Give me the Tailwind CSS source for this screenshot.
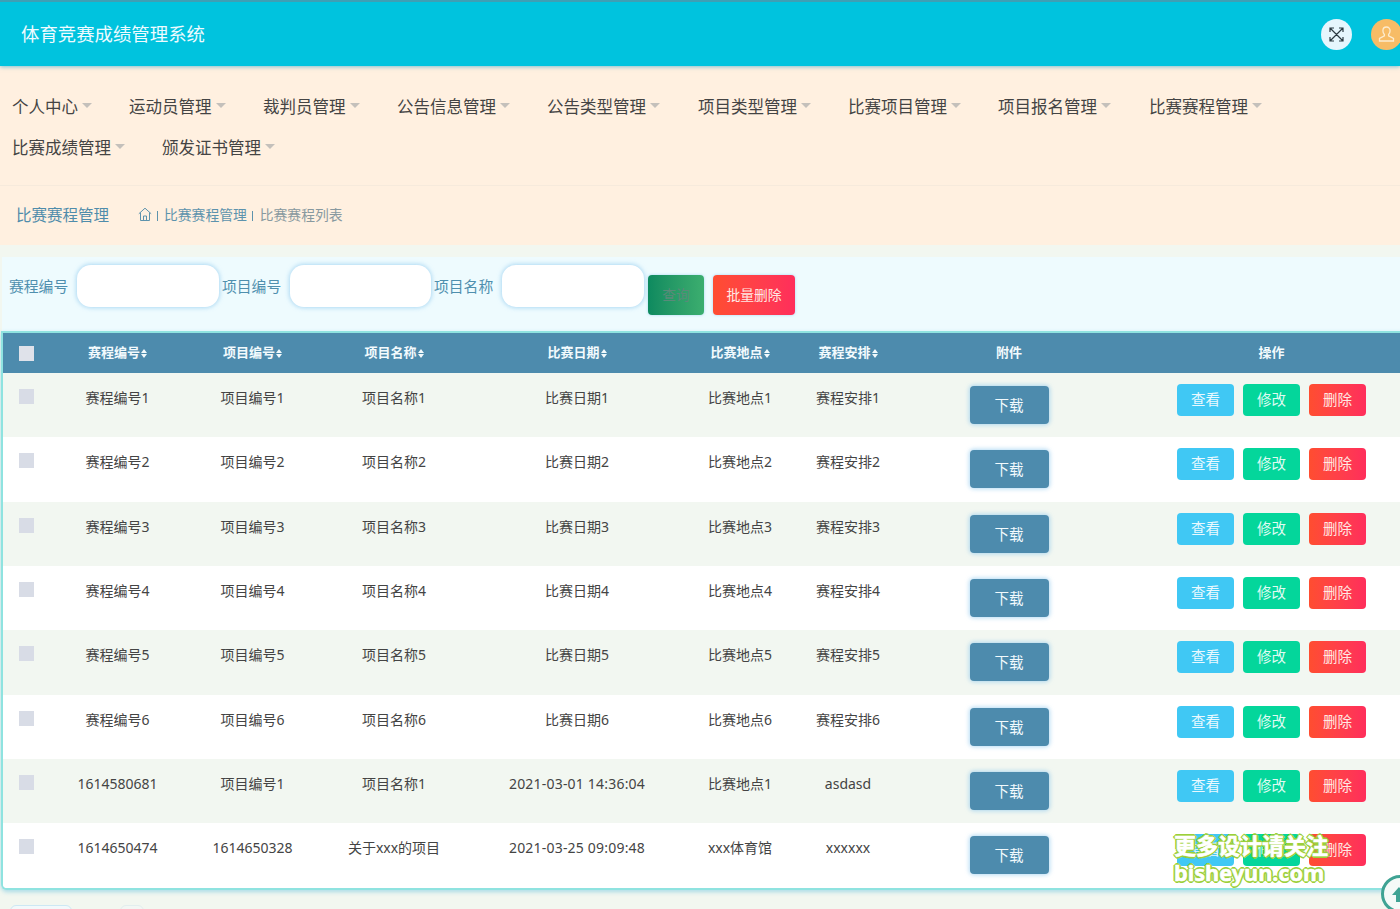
<!DOCTYPE html>
<html lang="zh-CN">
<head>
    <meta charset="UTF-8">
    <title>体育竞赛成绩管理系统</title>
    <script src="https://cdn.jsdelivr.net/npm/@tailwindcss/browser@4"></script>
</head>
<body class="bg-[#f2f7f0] font-['Noto_Sans','Noto_Sans_CJK_SC',sans-serif]">
<div class="relative w-[1400px] h-[909px] overflow-hidden">

    <!-- header -->
    <header class="h-[66px] bg-[#00c3de] border-t-2 border-[#3f9fb4] flex items-center justify-between pl-[21px] shadow-[0_1px_4px_rgba(0,150,200,0.5)] relative z-10">
        <h1 class="text-[18.4px] text-[#eefbff]">体育竞赛成绩管理系统</h1>
        <div class="flex gap-[19px] mr-[-2px]">
            <div class="w-[31px] h-[31px] rounded-full bg-[#e6f6fd] flex items-center justify-center">
                <svg width="15" height="15" viewBox="0 0 15 15" fill="none" stroke="#2b3a42" stroke-width="1.2"><path d="M1.5 1.5l12 12M13.5 1.5l-12 12M1 5V1h4M10 1h4v4M14 10v4h-4M5 14H1v-4"/></svg>
            </div>
            <div class="w-[31px] h-[31px] rounded-full bg-[#f7bc66] flex items-center justify-center">
                <svg width="19" height="19" viewBox="0 0 19 19" fill="none" stroke="#fdeccf" stroke-width="1.3"><path d="M9.5 2c-2.3 0-3.6 1.700-3.600 3.800 0 1.500.6 2.800 1.500 3.700v1.400L2.500 13.500v2.500h14v-2.500l-4.900-2.600V9.500c.9-.9 1.500-2.200 1.500-3.700C13.100 3.700 11.800 2 9.500 2z"/></svg>
            </div>
        </div>
    </header>

    <!-- nav -->
    <nav class="h-[120px] bg-[#fff0e0] border-b border-[#f6eadc] pt-[20px] pl-[12px] text-[16.5px] text-[#444] leading-[41px]">
        <div class="flex">
            <div class="flex items-center w-[117px]">个人中心<span class="ml-[4px] mt-[-2px] border-x-[5px] border-t-[5px] border-x-transparent border-t-[#c4c0bb]"></span></div>
            <div class="flex items-center w-[134px]">运动员管理<span class="ml-[4px] mt-[-2px] border-x-[5px] border-t-[5px] border-x-transparent border-t-[#c4c0bb]"></span></div>
            <div class="flex items-center w-[134px]">裁判员管理<span class="ml-[4px] mt-[-2px] border-x-[5px] border-t-[5px] border-x-transparent border-t-[#c4c0bb]"></span></div>
            <div class="flex items-center w-[150px]">公告信息管理<span class="ml-[4px] mt-[-2px] border-x-[5px] border-t-[5px] border-x-transparent border-t-[#c4c0bb]"></span></div>
            <div class="flex items-center w-[151px]">公告类型管理<span class="ml-[4px] mt-[-2px] border-x-[5px] border-t-[5px] border-x-transparent border-t-[#c4c0bb]"></span></div>
            <div class="flex items-center w-[150px]">项目类型管理<span class="ml-[4px] mt-[-2px] border-x-[5px] border-t-[5px] border-x-transparent border-t-[#c4c0bb]"></span></div>
            <div class="flex items-center w-[150px]">比赛项目管理<span class="ml-[4px] mt-[-2px] border-x-[5px] border-t-[5px] border-x-transparent border-t-[#c4c0bb]"></span></div>
            <div class="flex items-center w-[151px]">项目报名管理<span class="ml-[4px] mt-[-2px] border-x-[5px] border-t-[5px] border-x-transparent border-t-[#c4c0bb]"></span></div>
            <div class="flex items-center">比赛赛程管理<span class="ml-[4px] mt-[-2px] border-x-[5px] border-t-[5px] border-x-transparent border-t-[#c4c0bb]"></span></div>
        </div>
        <div class="flex">
            <div class="flex items-center w-[150px]">比赛成绩管理<span class="ml-[4px] mt-[-2px] border-x-[5px] border-t-[5px] border-x-transparent border-t-[#c4c0bb]"></span></div>
            <div class="flex items-center">颁发证书管理<span class="ml-[4px] mt-[-2px] border-x-[5px] border-t-[5px] border-x-transparent border-t-[#c4c0bb]"></span></div>
        </div>
    </nav>

    <!-- breadcrumb -->
    <div class="h-[59px] bg-[#fff0e0] flex items-center pl-[16px]">
        <span class="text-[15.5px] text-[#4f8cab] w-[122px]">比赛赛程管理</span>
        <svg class="mt-[-3px]" width="14" height="15" viewBox="0 0 14 15" fill="none" stroke="#5d93ad" stroke-width="1"><path d="M.8 6.800 7 1.200l6.200 5.600M2.500 5.500v8h9v-8M5.500 13.500V9h3v4.500"/></svg>
        <span class="ml-[5px] w-[1px] h-[10px] bg-[#5d93ad]"></span>
        <span class="ml-[6px] text-[13.8px] text-[#5d93ad]">比赛赛程管理</span>
        <span class="ml-[5px] w-[1px] h-[10px] bg-[#5d93ad]"></span>
        <span class="ml-[7px] text-[13.800px] text-[#88999f]">比赛赛程列表</span>
    </div>

    <!-- search -->
    <div class="mt-[12px] h-[74px] ml-[2px] bg-[#eefbfe] flex items-start pl-[7px] pt-[8px] text-[14.8px] text-[#4f8fae]">
        <label class="mt-[10px] w-[68px]">赛程编号</label>
        <input type="text" class="w-[142px] h-[42px] bg-white rounded-[14px] shadow-[0_0_4px_1px_rgba(120,190,235,0.55)]">
        <label class="mt-[10px] ml-[3px] w-[68px]">项目编号</label>
        <input type="text" class="w-[141px] h-[42px] bg-white rounded-[14px] shadow-[0_0_4px_1px_rgba(120,190,235,0.55)]">
        <label class="mt-[10px] ml-[3px] w-[68px]">项目名称</label>
        <input type="text" class="w-[142px] h-[42px] bg-white rounded-[14px] shadow-[0_0_4px_1px_rgba(120,190,235,0.55)]">
        <button class="mt-[10px] ml-[4px] w-[56px] h-[40px] rounded-[4px] bg-gradient-to-r from-[#0d8a5f] to-[#3cae6f] text-[13.8px] text-[#5a8a7a] shadow-[0_0_3px_rgba(120,190,235,0.6)]">查询</button>
        <button class="mt-[10px] ml-[9px] w-[82px] h-[40px] rounded-[4px] bg-gradient-to-r from-[#ff4d30] to-[#ff2e5b] text-[13.8px] text-[#ffe9e4] shadow-[0_0_3px_rgba(120,190,235,0.6)]">批量删除</button>
    </div>

    <!-- table -->
    <div class="ml-[1px] rounded-b-[6px] border-l-2 border-t-2 border-b-2 border-[#8fe3e0] w-[1428px] bg-white overflow-hidden shadow-[0_2px_4px_rgba(120,200,225,0.6)]">
        <table class="table-fixed w-[1427px] text-[14px] text-[#444] text-center border-collapse">
            <colgroup>
                <col class="w-[50px]"><col class="w-[129px]"><col class="w-[141px]"><col class="w-[142px]"><col class="w-[224px]"><col class="w-[102px]"><col class="w-[114px]"><col class="w-[208px]"><col class="w-[317px]">
            </colgroup>
            <thead>
                <tr class="h-[40px] bg-[#4d8bad] text-[13px] font-bold text-[#f2fafd]">
                    <th class="pl-[16px] text-left"><span class="block w-[15px] h-[15px] bg-[#dfe2ea]"></span></th>
                    <th>赛程编号<span class="inline-flex flex-col gap-[1px] ml-[1px] align-middle"><i class="border-x-[3.500px] border-b-[4px] border-x-transparent border-b-[#f2fafd]"></i><i class="border-x-[3.500px] border-t-[4px] border-x-transparent border-t-[#f2fafd]"></i></span></th>
                    <th>项目编号<span class="inline-flex flex-col gap-[1px] ml-[1px] align-middle"><i class="border-x-[3.500px] border-b-[4px] border-x-transparent border-b-[#f2fafd]"></i><i class="border-x-[3.500px] border-t-[4px] border-x-transparent border-t-[#f2fafd]"></i></span></th>
                    <th>项目名称<span class="inline-flex flex-col gap-[1px] ml-[1px] align-middle"><i class="border-x-[3.500px] border-b-[4px] border-x-transparent border-b-[#f2fafd]"></i><i class="border-x-[3.500px] border-t-[4px] border-x-transparent border-t-[#f2fafd]"></i></span></th>
                    <th>比赛日期<span class="inline-flex flex-col gap-[1px] ml-[1px] align-middle"><i class="border-x-[3.500px] border-b-[4px] border-x-transparent border-b-[#f2fafd]"></i><i class="border-x-[3.500px] border-t-[4px] border-x-transparent border-t-[#f2fafd]"></i></span></th>
                    <th>比赛地点<span class="inline-flex flex-col gap-[1px] ml-[1px] align-middle"><i class="border-x-[3.500px] border-b-[4px] border-x-transparent border-b-[#f2fafd]"></i><i class="border-x-[3.500px] border-t-[4px] border-x-transparent border-t-[#f2fafd]"></i></span></th>
                    <th>赛程安排<span class="inline-flex flex-col gap-[1px] ml-[1px] align-middle"><i class="border-x-[3.500px] border-b-[4px] border-x-transparent border-b-[#f2fafd]"></i><i class="border-x-[3.500px] border-t-[4px] border-x-transparent border-t-[#f2fafd]"></i></span></th>
                    <th>附件</th>
                    <th>操作</th>
                </tr>
            </thead>
            <tbody class="align-top">
                <tr class="h-[64.33px] bg-[#f2f7f1]">
                    <td class="pl-[16px] pt-[16px]"><span class="block w-[15px] h-[15px] bg-[#d8dce6]"></span></td>
                    <td class="pt-[14px]">赛程编号1</td><td class="pt-[14px]">项目编号1</td><td class="pt-[14px]">项目名称1</td><td class="pt-[14px]">比赛日期1</td><td class="pt-[14px]">比赛地点1</td><td class="pt-[14px]">赛程安排1</td>
                    <td class="pt-[13px]"><button class="w-[79px] h-[38px] rounded-[4px] bg-[#4d8bad] text-[14.5px] text-[#f2fafd] pt-[2px] shadow-[0_0_4px_1px_rgba(120,190,235,0.55)]">下载</button></td>
                    <td class="pt-[11px]"><div class="flex justify-center gap-[9px]"><button class="w-[57px] h-[32px] rounded-[4px] bg-[#40c8f4] text-[14.5px] text-[#e9f9ff]">查看</button><button class="w-[57px] h-[32px] rounded-[4px] bg-[#04d69b] text-[14.5px] text-[#dffbf2]">修改</button><button class="w-[57px] h-[32px] rounded-[4px] bg-gradient-to-r from-[#ff4d30] to-[#ff2e5b] text-[14.5px] text-[#ffe9e4]">删除</button></div></td>
                </tr>
                <tr class="h-[64.33px] bg-white">
                    <td class="pl-[16px] pt-[16px]"><span class="block w-[15px] h-[15px] bg-[#d8dce6]"></span></td>
                    <td class="pt-[14px]">赛程编号2</td><td class="pt-[14px]">项目编号2</td><td class="pt-[14px]">项目名称2</td><td class="pt-[14px]">比赛日期2</td><td class="pt-[14px]">比赛地点2</td><td class="pt-[14px]">赛程安排2</td>
                    <td class="pt-[13px]"><button class="w-[79px] h-[38px] rounded-[4px] bg-[#4d8bad] text-[14.5px] text-[#f2fafd] pt-[2px] shadow-[0_0_4px_1px_rgba(120,190,235,0.55)]">下载</button></td>
                    <td class="pt-[11px]"><div class="flex justify-center gap-[9px]"><button class="w-[57px] h-[32px] rounded-[4px] bg-[#40c8f4] text-[14.5px] text-[#e9f9ff]">查看</button><button class="w-[57px] h-[32px] rounded-[4px] bg-[#04d69b] text-[14.5px] text-[#dffbf2]">修改</button><button class="w-[57px] h-[32px] rounded-[4px] bg-gradient-to-r from-[#ff4d30] to-[#ff2e5b] text-[14.5px] text-[#ffe9e4]">删除</button></div></td>
                </tr>
                <tr class="h-[64.33px] bg-[#f2f7f1]">
                    <td class="pl-[16px] pt-[16px]"><span class="block w-[15px] h-[15px] bg-[#d8dce6]"></span></td>
                    <td class="pt-[14px]">赛程编号3</td><td class="pt-[14px]">项目编号3</td><td class="pt-[14px]">项目名称3</td><td class="pt-[14px]">比赛日期3</td><td class="pt-[14px]">比赛地点3</td><td class="pt-[14px]">赛程安排3</td>
                    <td class="pt-[13px]"><button class="w-[79px] h-[38px] rounded-[4px] bg-[#4d8bad] text-[14.5px] text-[#f2fafd] pt-[2px] shadow-[0_0_4px_1px_rgba(120,190,235,0.55)]">下载</button></td>
                    <td class="pt-[11px]"><div class="flex justify-center gap-[9px]"><button class="w-[57px] h-[32px] rounded-[4px] bg-[#40c8f4] text-[14.5px] text-[#e9f9ff]">查看</button><button class="w-[57px] h-[32px] rounded-[4px] bg-[#04d69b] text-[14.5px] text-[#dffbf2]">修改</button><button class="w-[57px] h-[32px] rounded-[4px] bg-gradient-to-r from-[#ff4d30] to-[#ff2e5b] text-[14.5px] text-[#ffe9e4]">删除</button></div></td>
                </tr>
                <tr class="h-[64.33px] bg-white">
                    <td class="pl-[16px] pt-[16px]"><span class="block w-[15px] h-[15px] bg-[#d8dce6]"></span></td>
                    <td class="pt-[14px]">赛程编号4</td><td class="pt-[14px]">项目编号4</td><td class="pt-[14px]">项目名称4</td><td class="pt-[14px]">比赛日期4</td><td class="pt-[14px]">比赛地点4</td><td class="pt-[14px]">赛程安排4</td>
                    <td class="pt-[13px]"><button class="w-[79px] h-[38px] rounded-[4px] bg-[#4d8bad] text-[14.5px] text-[#f2fafd] pt-[2px] shadow-[0_0_4px_1px_rgba(120,190,235,0.55)]">下载</button></td>
                    <td class="pt-[11px]"><div class="flex justify-center gap-[9px]"><button class="w-[57px] h-[32px] rounded-[4px] bg-[#40c8f4] text-[14.5px] text-[#e9f9ff]">查看</button><button class="w-[57px] h-[32px] rounded-[4px] bg-[#04d69b] text-[14.5px] text-[#dffbf2]">修改</button><button class="w-[57px] h-[32px] rounded-[4px] bg-gradient-to-r from-[#ff4d30] to-[#ff2e5b] text-[14.5px] text-[#ffe9e4]">删除</button></div></td>
                </tr>
                <tr class="h-[64.33px] bg-[#f2f7f1]">
                    <td class="pl-[16px] pt-[16px]"><span class="block w-[15px] h-[15px] bg-[#d8dce6]"></span></td>
                    <td class="pt-[14px]">赛程编号5</td><td class="pt-[14px]">项目编号5</td><td class="pt-[14px]">项目名称5</td><td class="pt-[14px]">比赛日期5</td><td class="pt-[14px]">比赛地点5</td><td class="pt-[14px]">赛程安排5</td>
                    <td class="pt-[13px]"><button class="w-[79px] h-[38px] rounded-[4px] bg-[#4d8bad] text-[14.5px] text-[#f2fafd] pt-[2px] shadow-[0_0_4px_1px_rgba(120,190,235,0.55)]">下载</button></td>
                    <td class="pt-[11px]"><div class="flex justify-center gap-[9px]"><button class="w-[57px] h-[32px] rounded-[4px] bg-[#40c8f4] text-[14.5px] text-[#e9f9ff]">查看</button><button class="w-[57px] h-[32px] rounded-[4px] bg-[#04d69b] text-[14.5px] text-[#dffbf2]">修改</button><button class="w-[57px] h-[32px] rounded-[4px] bg-gradient-to-r from-[#ff4d30] to-[#ff2e5b] text-[14.5px] text-[#ffe9e4]">删除</button></div></td>
                </tr>
                <tr class="h-[64.33px] bg-white">
                    <td class="pl-[16px] pt-[16px]"><span class="block w-[15px] h-[15px] bg-[#d8dce6]"></span></td>
                    <td class="pt-[14px]">赛程编号6</td><td class="pt-[14px]">项目编号6</td><td class="pt-[14px]">项目名称6</td><td class="pt-[14px]">比赛日期6</td><td class="pt-[14px]">比赛地点6</td><td class="pt-[14px]">赛程安排6</td>
                    <td class="pt-[13px]"><button class="w-[79px] h-[38px] rounded-[4px] bg-[#4d8bad] text-[14.5px] text-[#f2fafd] pt-[2px] shadow-[0_0_4px_1px_rgba(120,190,235,0.55)]">下载</button></td>
                    <td class="pt-[11px]"><div class="flex justify-center gap-[9px]"><button class="w-[57px] h-[32px] rounded-[4px] bg-[#40c8f4] text-[14.5px] text-[#e9f9ff]">查看</button><button class="w-[57px] h-[32px] rounded-[4px] bg-[#04d69b] text-[14.5px] text-[#dffbf2]">修改</button><button class="w-[57px] h-[32px] rounded-[4px] bg-gradient-to-r from-[#ff4d30] to-[#ff2e5b] text-[14.5px] text-[#ffe9e4]">删除</button></div></td>
                </tr>
                <tr class="h-[64.33px] bg-[#f2f7f1]">
                    <td class="pl-[16px] pt-[16px]"><span class="block w-[15px] h-[15px] bg-[#d8dce6]"></span></td>
                    <td class="pt-[14px]">1614580681</td><td class="pt-[14px]">项目编号1</td><td class="pt-[14px]">项目名称1</td><td class="pt-[14px] tracking-[0.2px]">2021-03-01 14:36:04</td><td class="pt-[14px]">比赛地点1</td><td class="pt-[14px]">asdasd</td>
                    <td class="pt-[13px]"><button class="w-[79px] h-[38px] rounded-[4px] bg-[#4d8bad] text-[14.5px] text-[#f2fafd] pt-[2px] shadow-[0_0_4px_1px_rgba(120,190,235,0.55)]">下载</button></td>
                    <td class="pt-[11px]"><div class="flex justify-center gap-[9px]"><button class="w-[57px] h-[32px] rounded-[4px] bg-[#40c8f4] text-[14.5px] text-[#e9f9ff]">查看</button><button class="w-[57px] h-[32px] rounded-[4px] bg-[#04d69b] text-[14.5px] text-[#dffbf2]">修改</button><button class="w-[57px] h-[32px] rounded-[4px] bg-gradient-to-r from-[#ff4d30] to-[#ff2e5b] text-[14.5px] text-[#ffe9e4]">删除</button></div></td>
                </tr>
                <tr class="h-[64.33px] bg-white">
                    <td class="pl-[16px] pt-[16px]"><span class="block w-[15px] h-[15px] bg-[#d8dce6]"></span></td>
                    <td class="pt-[14px]">1614650474</td><td class="pt-[14px]">1614650328</td><td class="pt-[14px]">关于xxx的项目</td><td class="pt-[14px] tracking-[0.2px]">2021-03-25 09:09:48</td><td class="pt-[14px]">xxx体育馆</td><td class="pt-[14px]">xxxxxx</td>
                    <td class="pt-[13px]"><button class="w-[79px] h-[38px] rounded-[4px] bg-[#4d8bad] text-[14.5px] text-[#f2fafd] pt-[2px] shadow-[0_0_4px_1px_rgba(120,190,235,0.55)]">下载</button></td>
                    <td class="pt-[11px]"><div class="flex justify-center gap-[9px]"><button class="w-[57px] h-[32px] rounded-[4px] bg-[#40c8f4] text-[14.5px] text-[#e9f9ff]">查看</button><button class="w-[57px] h-[32px] rounded-[4px] bg-[#04d69b] text-[14.5px] text-[#dffbf2]">修改</button><button class="w-[57px] h-[32px] rounded-[4px] bg-gradient-to-r from-[#ff4d30] to-[#ff2e5b] text-[14.5px] text-[#ffe9e4]">删除</button></div></td>
                </tr>
            </tbody>
        </table>
    </div>

    <!-- pagination, cut off by the window -->
    <div class="mt-[6px] pl-[10px] pt-[9px] flex gap-[48px]">
        <span class="w-[62px] h-[20px] rounded-[6px] bg-[#f2f9fb] border border-[#cde8f4]"></span>
        <span class="w-[24px] h-[20px] rounded-[6px] bg-[#f2f7f4] border border-[#e2eeee]"></span>
    </div>

    <!-- watermark -->
    <div class="absolute left-[1174px] top-[832px] z-20 text-[22px] leading-[27px] font-bold text-white [-webkit-text-stroke:0.6px_white] [text-shadow:2px_0_0_#9ccf3a,-2px_0_0_#9ccf3a,0_2px_0_#9ccf3a,0_-2px_0_#9ccf3a,1px_1px_0_#9ccf3a,-1px_-1px_0_#9ccf3a,1px_-1px_0_#9ccf3a,-1px_1px_0_#9ccf3a]">
        <div>更多设计请关注</div>
        <div class="text-[21.7px]">bisheyun.com</div>
    </div>

    <!-- back to top -->
    <div class="absolute left-[1381px] top-[875px] z-20 w-[38px] h-[38px] rounded-full bg-[#f4faf8] border-[3px] border-[#3fa394] flex items-center pl-[8px]">
        <svg width="14" height="16" viewBox="0 0 14 16" fill="#3fa394"><path d="M7 1 14 9H10V16H4V9H0Z"/></svg>
    </div>
</div>
</body>
</html>
